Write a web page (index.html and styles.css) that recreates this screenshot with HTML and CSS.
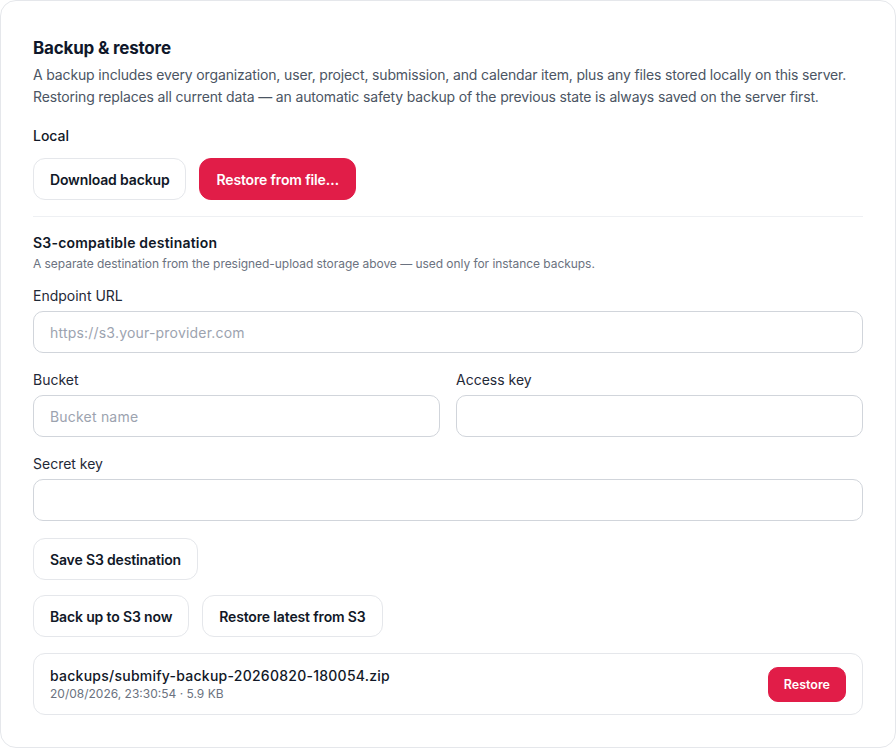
FILE: index.html
```html
<!DOCTYPE html>
<html lang="en">
<head>
    <meta charset="UTF-8">
    <meta name="viewport" content="width=device-width, initial-scale=1.0">
    <title>Backup &amp; restore</title>
    <link rel="stylesheet" href="styles.css">
</head>
<body>
    <div class="card">
        <h2 class="card-title">Backup &amp; restore</h2>
        <p class="card-desc">A backup includes every organization, user, project, submission, and calendar item, plus any files stored locally on this server. Restoring replaces all current data — an automatic safety backup of the previous state is always saved on the server first.</p>

        <div class="section-label">Local</div>
        <div class="btn-row">
            <button class="btn">Download backup</button>
            <button class="btn btn-primary">Restore from file…</button>
        </div>

        <hr class="divider">

        <div class="s3">
            <div class="s3-head">
                <div class="section-title">S3-compatible destination</div>
                <div class="section-sub">A separate destination from the presigned-upload storage above — used only for instance backups.</div>
            </div>

            <label class="field">
                <span class="field-label">Endpoint URL</span>
                <input class="input" type="text" placeholder="https://s3.your-provider.com">
            </label>

            <div class="field-grid">
                <label class="field">
                    <span class="field-label">Bucket</span>
                    <input class="input" type="text" placeholder="Bucket name">
                </label>
                <label class="field">
                    <span class="field-label">Access key</span>
                    <input class="input" type="text">
                </label>
            </div>

            <label class="field">
                <span class="field-label">Secret key</span>
                <input class="input" type="password">
            </label>

            <div class="btn-row">
                <button class="btn">Save S3 destination</button>
            </div>

            <div class="btn-row">
                <button class="btn">Back up to S3 now</button>
                <button class="btn">Restore latest from S3</button>
            </div>

            <div class="backup-item">
                <div class="backup-info">
                    <div class="backup-name">backups/submify-backup-20260820-180054.zip</div>
                    <div class="backup-meta">20/08/2026, 23:30:54 · 5.9 KB</div>
                </div>
                <button class="btn btn-primary btn-sm">Restore</button>
            </div>
        </div>
    </div>
</body>
</html>
```

FILE: styles.css
```css
* {
    box-sizing: border-box;
}

body {
    margin: 0;
    background: #ffffff;
    font-family: Inter, "Noto Sans", sans-serif;
    color: #111827;
}

.card {
    width: 896px;
    min-height: 748px;
    border: 1px solid #e5e7eb;
    border-radius: 16px;
    padding: 33px 32px 31px;
    background: #ffffff;
}

.card-title {
    margin: 0;
    font-size: 17px;
    line-height: 28px;
    font-weight: 700;
    color: #0f172a;
    letter-spacing: -0.2px;
}

.card-desc {
    margin: 2px 0 0;
    font-size: 14px;
    line-height: 22px;
    color: #4b5563;
    letter-spacing: -0.15px;
}

.section-label {
    margin-top: 18px;
    font-size: 14px;
    line-height: 20px;
    font-weight: 500;
}

.btn-row {
    display: flex;
    gap: 13px;
}

.section-label + .btn-row {
    margin-top: 12px;
}

.btn-row + .btn-row {
    margin-top: -2px;
}

.btn {
    height: 42px;
    padding: 0 16px;
    border: 1px solid #e5e7eb;
    border-radius: 12px;
    background: #ffffff;
    color: #111827;
    font-family: inherit;
    font-size: 14px;
    font-weight: 600;
    letter-spacing: -0.15px;
    cursor: pointer;
}

.btn-primary {
    background: #e11d48;
    border-color: #e11d48;
    color: #ffffff;
}

.btn-sm {
    height: 35px;
    padding: 0 15px;
    border-radius: 10px;
    font-size: 12.5px;
    letter-spacing: 0;
}

.divider {
    margin: 16px 0 0;
    border: none;
    border-top: 1px solid #eef0f3;
}

.s3 {
    display: flex;
    flex-direction: column;
    gap: 17px;
    margin-top: 16px;
}

.section-title {
    font-size: 14px;
    line-height: 20px;
    font-weight: 600;
    letter-spacing: 0.2px;
}

.section-sub {
    margin-top: 3px;
    font-size: 12px;
    line-height: 16px;
    color: #6b7280;
    letter-spacing: -0.05px;
}

.s3-head {
    margin-bottom: -3px;
}

.field {
    display: flex;
    flex-direction: column;
    gap: 5px;
}

.field-label {
    font-size: 14px;
    line-height: 20px;
    color: #1f2937;
}

.input {
    height: 42px;
    padding: 0 16px;
    border: 1px solid #d1d5db;
    border-radius: 10px;
    font-family: inherit;
    font-size: 14px;
    letter-spacing: 0.2px;
    color: #111827;
    outline: none;
}

.input::placeholder {
    color: #9ca3af;
}

.field-grid {
    display: grid;
    grid-template-columns: 1fr 1fr;
    gap: 16px;
}

.backup-item {
    display: flex;
    align-items: center;
    justify-content: space-between;
    margin-top: -1px;
    padding: 12px 16px;
    border: 1px solid #e5e7eb;
    border-radius: 12px;
}

.backup-name {
    font-size: 14px;
    line-height: 20px;
    font-weight: 500;
    letter-spacing: 0.25px;
}

.backup-meta {
    font-size: 12px;
    line-height: 16px;
    color: #6b7280;
}
```
